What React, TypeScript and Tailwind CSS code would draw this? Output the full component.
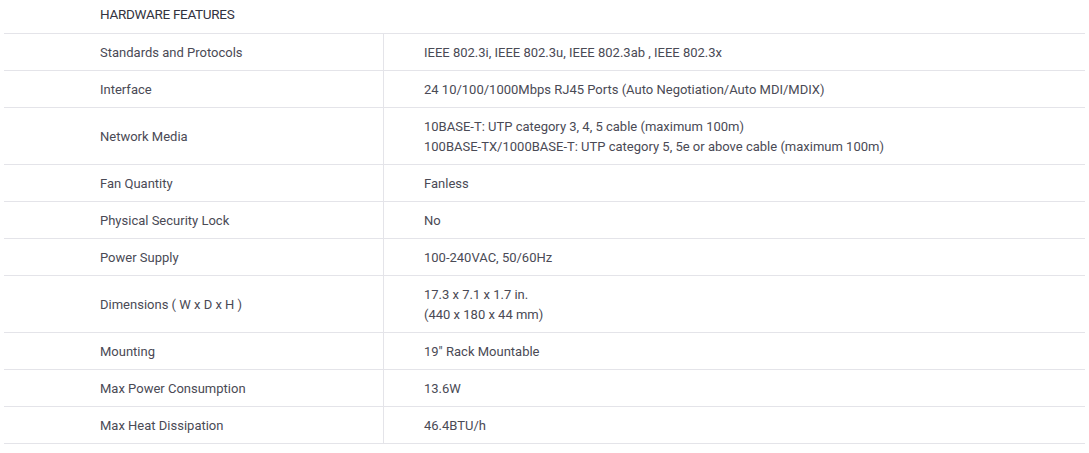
import React from 'react';

type Spec = { label: string; value: string[] };

const specs: Spec[] = [
  { label: 'Standards and Protocols', value: ['IEEE 802.3i, IEEE 802.3u, IEEE 802.3ab , IEEE 802.3x'] },
  { label: 'Interface', value: ['24 10/100/1000Mbps RJ45 Ports (Auto Negotiation/Auto MDI/MDIX)'] },
  {
    label: 'Network Media',
    value: [
      '10BASE-T: UTP category 3, 4, 5 cable (maximum 100m)',
      '100BASE-TX/1000BASE-T: UTP category 5, 5e or above cable (maximum 100m)',
    ],
  },
  { label: 'Fan Quantity', value: ['Fanless'] },
  { label: 'Physical Security Lock', value: ['No'] },
  { label: 'Power Supply', value: ['100-240VAC, 50/60Hz'] },
  { label: 'Dimensions ( W x D x H )', value: ['17.3 x 7.1 x 1.7 in.', '(440 x 180 x 44 mm)'] },
  { label: 'Mounting', value: ['19" Rack Mountable'] },
  { label: 'Max Power Consumption', value: ['13.6W'] },
  { label: 'Max Heat Dissipation', value: ['46.4BTU/h'] },
];

const App: React.FC = () => {
  return (
    <div className="bg-white min-h-[453px] w-[1089px] px-1 text-[13px] leading-5 text-[#4a4a55] [font-family:Roboto,'Liberation_Sans',sans-serif]">
      {/* Section title */}
      <div className="h-[33px] pt-[4px] pl-[96px] text-[13.5px] tracking-[-0.3px] text-[#333340]">HARDWARE FEATURES</div>

      <div className="w-[1081px] border-t border-[#e4e4e9]">
        {specs.map((s) => (
          <div key={s.label} className="flex border-b border-[#e4e4e9]">
            <div className="w-[380px] shrink-0 flex items-center pl-[96px] pt-[9px] pb-[7px] border-r border-[#e4e4e9]">
              {s.label}
            </div>
            <div className="flex-1 pl-[40px] pt-[9px] pb-[7px]">
              {s.value.map((v) => (
                <div key={v}>{v}</div>
              ))}
            </div>
          </div>
        ))}
      </div>
    </div>
  );
};

export default App;
